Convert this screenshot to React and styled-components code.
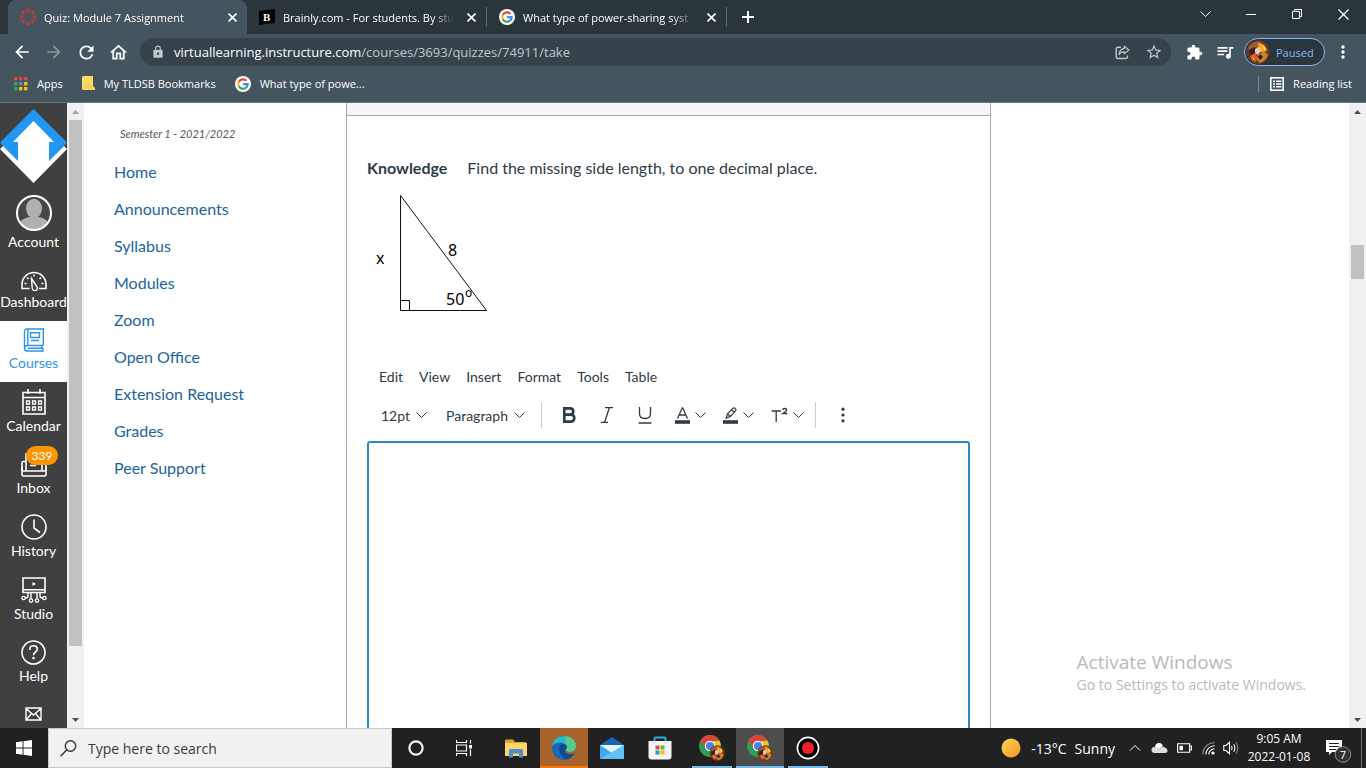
import React from "react";
import styled, { createGlobalStyle, css } from "styled-components";
import {
  MdArrowBack,
  MdArrowForward,
  MdRefresh,
  MdOutlineHome,
  MdLock,
  MdStarBorder,
  MdExtension,
  MdQueueMusic,
  MdMoreVert,
} from "react-icons/md";

const GlobalStyle = createGlobalStyle`
  * {
    box-sizing: border-box;
  }
  body {
    margin: 0;
    overflow: hidden;
    font-family: "Open Sans", "Noto Sans", sans-serif;
  }
  button, input, select, textarea {
    font: inherit;
    color: inherit;
    margin: 0;
    padding: 0;
    border: 0;
    background: none;
  }
  a {
    color: inherit;
    text-decoration: none;
  }
  svg {
    display: block;
    flex: none;
  }
`;

const Screen = styled.div`
  display: flex;
  flex-direction: column;
  height: 100vh;
`;

/* ---------- browser window ---------- */

const TabStrip = styled.div`
  display: flex;
  align-items: stretch;
  height: 34px;
  padding-left: 8px;
  background: #2b363c;
  color: #fff;
  font-size: 11px;
`;

const Tab = styled.div`
  display: flex;
  align-items: center;
  gap: 8px;
  width: 239px;
  padding: 0 7px 0 12px;
  white-space: nowrap;
  ${(props) =>
    props.$active &&
    css`
      background: #45555f;
      border-radius: 8px 8px 0 0;
    `}
`;

const TabTitle = styled.span`
  flex: 1;
  overflow: hidden;
  mask-image: linear-gradient(to right, #000 86%, transparent);
`;

const TabDivider = styled.span`
  align-self: center;
  width: 1px;
  height: 20px;
  background: #5d6a72;
`;

const IconButton = styled.button`
  display: flex;
  align-items: center;
  justify-content: center;
  width: ${(props) => props.$width || 16}px;
  color: ${(props) => props.$color || "inherit"};
`;

const WindowControls = styled.div`
  display: flex;
  margin-left: auto;
  height: 28px;
`;

const Toolbar = styled.div`
  display: flex;
  align-items: center;
  height: 36px;
  padding: 0 5px 0 6px;
  background: #45555f;
  color: #fff;
`;

const Omnibox = styled.div`
  display: flex;
  flex: 1;
  align-items: center;
  height: 28px;
  margin: 0 11px 0 6px;
  padding: 0 1px 0 11px;
  border-radius: 14px;
  background: #36434a;
  color: #c1c7ca;
  font-size: 13px;
`;

const Address = styled.span`
  flex: 1;
  padding-left: 9px;
  b {
    font-weight: 400;
    color: #fff;
  }
`;

const ProfileChip = styled.button`
  display: flex;
  align-items: center;
  gap: 6px;
  height: 28px;
  width: 81px;
  padding-left: 1px;
  border: 1px solid #8ab4f8;
  border-radius: 14px;
  background: #2b363c;
  color: #8ab4f8;
  font-size: 11px;
`;

const BookmarkBar = styled.div`
  display: flex;
  align-items: center;
  gap: 19px;
  height: 33px;
  padding: 0 14px 5px;
  border-bottom: 1px solid #6b787f;
  background: #45555f;
  color: #fff;
  font-size: 11px;
`;

const Bookmark = styled.a`
  display: flex;
  align-items: center;
  gap: 9px;
`;

const ReadingList = styled.button`
  display: flex;
  align-items: center;
  gap: 9px;
  height: 16px;
  margin-left: auto;
  padding-left: 11px;
  border-left: 1px solid #7b878e;
`;

/* ---------- page ---------- */

const Page = styled.div`
  display: flex;
  flex: 1;
  min-height: 0;
  position: relative;
  background: #fff;
  color: #2d3b45;
  font-family: Lato, sans-serif;
`;

const GlobalNav = styled.nav`
  display: flex;
  flex-direction: column;
  width: 67px;
  overflow: hidden;
  background: #404040;
`;

const LogoLink = styled.a`
  padding: 6px 0 5px;
`;

const NavItem = styled.a`
  display: flex;
  flex-direction: column;
  align-items: center;
  gap: 2px;
  padding: 7px 0 10px;
  position: relative;
  font-size: 14px;
  line-height: 18px;
  background: ${(props) => (props.$active ? "#fff" : "transparent")};
  color: ${(props) => (props.$active ? "#2c93e8" : "#fff")};
`;

const Badge = styled.span`
  position: absolute;
  top: 1px;
  left: 26px;
  width: 32px;
  border-radius: 10px;
  background: #fc9403;
  color: #fff;
  font-size: 12px;
  line-height: 19px;
  text-align: center;
`;

const ScrollTrack = styled.div`
  display: flex;
  flex-direction: column;
  align-items: center;
  width: 17px;
  background: #f1f1f1;
`;

const ScrollArrow = styled.button`
  display: flex;
  align-items: center;
  justify-content: center;
  width: 17px;
  height: 17px;
  color: ${(props) => (props.$dim ? "#a3a3a3" : "#505050")};
`;

const ScrollPart = styled.div`
  width: 13px;
  background: ${(props) => (props.$thumb ? "#c1c1c1" : "transparent")};
`;

const CourseNav = styled.nav`
  display: flex;
  flex-direction: column;
  width: 262px;
  padding: 22px 30px;
  font-size: 16px;
  line-height: 37px;
  color: #1a649b;
`;

const Term = styled.span`
  padding: 0 6px;
  margin-bottom: 10px;
  color: #4b5761;
  font-size: 11px;
  font-style: italic;
  line-height: 18px;
`;

const Question = styled.main`
  display: flex;
  flex: 1;
  flex-direction: column;
  min-width: 0;
  border: solid #a5a8aa;
  border-width: 0 1px;
`;

const QuestionHeader = styled.div`
  height: 13px;
  background: #f5f5f5;
  border-bottom: 1px solid #a5a8aa;
`;

const QuestionBody = styled.div`
  display: flex;
  flex: 1;
  flex-direction: column;
  min-height: 0;
  padding: 40px 20px 0;
`;

const Prompt = styled.p`
  display: flex;
  gap: 20px;
  margin: 0;
  font-size: 16px;
  line-height: 24px;
`;

const Triangle = styled.svg`
  margin: 10px 0 48px;
  font-family: "Noto Sans", sans-serif;
  font-size: 16px;
`;

const MenuBar = styled.div`
  display: flex;
  gap: 16px;
  padding-left: 12px;
  font-size: 14px;
  line-height: 20px;
`;

const EditorTools = styled.div`
  display: flex;
  align-items: center;
  height: 34px;
  margin: 11px 0 9px;
  padding-left: 14px;
  font-size: 14px;
`;

const Dropdown = styled.label`
  display: flex;
  align-items: center;
  gap: 6px;
  margin-right: ${(props) => props.$after}px;
  select {
    appearance: none;
    field-sizing: content;
  }
`;

const ToolGroup = styled.div`
  display: flex;
  align-items: center;
  height: 26px;
  border: solid #c7cdd1;
  border-width: 0 1px;
  padding: 0 11px 0 8px;
`;

const SplitTools = styled.div`
  display: flex;
  gap: 17px;
  margin-left: 11px;
`;

const SplitTool = styled.button`
  display: flex;
  align-items: center;
  gap: 5px;
`;

const Answer = styled.textarea`
  flex: 1;
  border: 2px solid #3088c2;
  border-bottom: 0;
  border-radius: 3px 3px 0 0;
  outline: none;
  resize: none;
  padding: 12px;
`;

const SidePanel = styled.aside`
  width: 358px;
`;

const Watermark = styled.div`
  position: absolute;
  right: 60px;
  bottom: 33px;
  color: #b9b9b9;
  font-family: "Open Sans", sans-serif;
  font-size: 14px;
  line-height: 20px;
  strong {
    display: block;
    font-size: 19px;
    font-weight: 400;
    line-height: 26px;
  }
`;

/* ---------- taskbar ---------- */

const Taskbar = styled.footer`
  display: flex;
  height: 40px;
  background: #212121;
  color: #fff;
`;

const SearchBox = styled.label`
  display: flex;
  align-items: center;
  gap: 11px;
  width: 344px;
  padding-left: 11px;
  border: 1px solid #c8c8c8;
  background: #f1f1f1;
  color: #333;
  font-size: 14px;
  input {
    flex: 1;
    outline: none;
  }
  input::placeholder {
    color: #3a3a3a;
    opacity: 1;
  }
`;

const AppGroup = styled.div`
  display: flex;
  margin-right: 4px;
`;

const tileColors = {
  orange: "#a9632c",
  current: "#4d4d4d",
};

const AppTile = styled.button`
  display: flex;
  align-items: center;
  justify-content: center;
  width: 48px;
  background: ${(props) => tileColors[props.$tile] || "transparent"};
  ${(props) =>
    props.$line &&
    css`
      background-image: linear-gradient(${props.$line}, ${props.$line});
      background-size: ${props.$tile ? "100%" : "40px"} 2px;
      background-position: bottom;
      background-repeat: no-repeat;
    `}
`;

const Tray = styled.div`
  display: flex;
  align-items: center;
  margin-left: auto;
  padding-right: 4px;
`;

const Weather = styled.button`
  display: flex;
  align-items: center;
  gap: 10px;
  margin-right: 8px;
  font-size: 14px;
  span {
    display: flex;
    gap: 8px;
  }
`;

const Clock = styled.button`
  width: 74px;
  font-size: 12px;
  line-height: 18px;
`;

const Notifications = styled.button`
  display: flex;
  align-items: center;
  justify-content: center;
  width: 46px;
  height: 40px;
  border-right: 1px solid #777;
`;

/* ---------- drawings ---------- */

const Cross = ({ size = 9, weight = 1.6 }) => (
  <svg width={size} height={size} viewBox={`0 0 ${size} ${size}`} stroke="currentColor" strokeWidth={weight}>
    <path d={`M0.5 0.5L${size - 0.5} ${size - 0.5}M${size - 0.5} 0.5L0.5 ${size - 0.5}`} />
  </svg>
);

const Chevron = ({ up, width = 11 }) => (
  <svg width={width} height="6" viewBox="0 0 11 6" fill="none" stroke="currentColor" strokeWidth="1">
    <path d={up ? "M0.5 5.5L5.5 0.5L10.5 5.5" : "M0.5 0.5L5.5 5.5L10.5 0.5"} />
  </svg>
);

const CanvasMark = () => (
  <svg width="16" height="16" viewBox="0 0 16 16" fill="none" stroke="#d6333a">
    <circle cx="8" cy="8" r="6.7" strokeWidth="2.4" strokeDasharray="3.5 1.76" strokeDashoffset="1.7" />
    <circle cx="8" cy="8" r="4" strokeWidth="0.9" strokeDasharray="0.9 2.24" />
  </svg>
);

const BrainlyMark = () => (
  <svg width="16" height="16" viewBox="0 0 16 16">
    <path d="M0 2L16 0V14L0 16Z" fill="#000" />
    <text x="4" y="12" fontSize="11" fontWeight="700" fontFamily="Liberation Serif, serif" fill="#fff">
      B
    </text>
  </svg>
);

const GoogleMark = () => (
  <svg width="16" height="16" viewBox="0 0 16 16" fill="none" strokeWidth="2.1">
    <circle cx="8" cy="8" r="8" fill="#fff" />
    <path d="M11.4 4.8A4.7 4.7 0 0 0 3.8 5.9" stroke="#ea4335" />
    <path d="M3.8 5.9A4.7 4.7 0 0 0 3.8 10.2" stroke="#fbbc05" />
    <path d="M3.8 10.2A4.7 4.7 0 0 0 11 11.6" stroke="#34a853" />
    <path d="M11 11.6A4.7 4.7 0 0 0 12.7 8.1H8.1" stroke="#4285f4" />
  </svg>
);

const AppsMark = () => {
  const colors = ["#ea4335", "#ea4335", "#ea4335", "#34a853", "#4285f4", "#fbbc05", "#34a853", "#fbbc05", "#fbbc05"];
  return (
    <svg width="14" height="14" viewBox="0 0 14 14">
      {colors.map((color, i) => (
        <rect key={i} x={(i % 3) * 5} y={Math.floor(i / 3) * 5} width="3.4" height="3.4" fill={color} />
      ))}
    </svg>
  );
};

const FolderMark = () => (
  <svg width="13" height="15" viewBox="0 0 13 15">
    <path d="M0 1.5Q0 0 1.5 0H11V10L13 12V14H1.5Q0 14 0 12.5Z" fill="#fbd966" />
    <path d="M3 8H8M3 10H10M3 12H10" stroke="#e6b93c" strokeDasharray="1.5 1" />
  </svg>
);

const ShareMark = () => (
  <svg width="15" height="15" viewBox="0 0 15 15" fill="none" stroke="currentColor" strokeWidth="1.4">
    <path d="M6 2.2H3.2Q1.2 2.2 1.2 4.2V11.5Q1.2 13.5 3.2 13.5H10.5Q12.5 13.5 12.5 11.5V10.5" />
    <path d="M9.3 1.2L13.8 5L9.3 8.8V6.8Q5.5 6.6 4 9.6Q4.4 4.2 9.3 3.4Z" strokeLinejoin="round" strokeWidth="1.2" />
  </svg>
);

const ListMark = () => (
  <svg width="14" height="14" viewBox="0 0 14 14" fill="none" stroke="currentColor" strokeWidth="1.6">
    <rect x="0.8" y="0.8" width="12.4" height="12.4" />
    <path d="M3 4.3H5M6 4.3H11.4M3 7H5M6 7H11.4M3 9.7H5M6 9.7H11.4" strokeWidth="1.4" />
  </svg>
);

const PhotoMark = ({ size = 24 }) => (
  <svg width={size} height={size} viewBox="0 0 24 24">
    <circle cx="12" cy="12" r="11.5" fill="#6d3a22" />
    <path d="M2 8Q8 0 15 2L19 6L13 9L9 7L5 12Z" fill="#a4602a" />
    <path d="M12 3L18 5L21 10L17 13L13 10Z" fill="#f6a92c" />
    <path d="M3 10L8 7L11 10L9 15L4 16Z" fill="#33242c" />
    <path d="M9 9L13 7L15 11L12 15L9 13Z" fill="#e9c9b2" />
    <path d="M4 16L9 13L12 18L9 22Q5 20 4 16Z" fill="#e45a1e" />
    <path d="M12 15L18 11L22 15Q20 21 14 23L11 20Z" fill="#c98128" />
    <path d="M14 14L17 17L14 20L12 17Z" fill="#2a1d20" />
    <path d="M17 6L20 8L18 10ZM6 17L8 18L8 20Z" fill="#ffe08a" />
  </svg>
);

const BrandMark = () => (
  <svg width="67" height="74" viewBox="0 0 67 74">
    <path d="M33.5 0L67 33.5L64 37L49 53V33H18V53L3 37L0 33.5Z" fill="#2196f3" />
    <path d="M33.5 12L54 33H49V52L64 37L67 40L33.5 74L0 40L3 37L18 52V33H13Z" fill="#fff" />
  </svg>
);

const line = { fill: "none", stroke: "currentColor", strokeWidth: 1.6 };

const AccountIcon = () => (
  <svg width="36" height="36" viewBox="0 0 36 36">
    <circle cx="18" cy="18" r="17" fill="#474747" />
    <path d="M4 27Q8 22.5 14 22L22 22Q28 22.5 32 27Q27 34.5 18 34.5Q9 34.5 4 27Z" fill="#b0b0b0" />
    <ellipse cx="18" cy="13.5" rx="8" ry="9.8" fill="#b0b0b0" />
    <circle cx="18" cy="18" r="17" fill="none" stroke="#fff" strokeWidth="2" />
  </svg>
);

const DashboardIcon = () => (
  <svg width="26" height="23" viewBox="0 0 26 23" {...line}>
    <path d="M8.5 20.5H1V16.5A12 12 0 0 1 25 16.5V20.5H18" />
    <path d="M10.5 10.5L15.6 18.2A2.6 2.6 0 1 1 11.2 20Z" strokeWidth="1.4" />
    <path d="M3.5 15.5H5.5M6 9.5L7.5 11M13 6.5V8.5M20 9.5L18.5 11M22.5 15.5H20.5" strokeWidth="1.4" />
  </svg>
);

const CoursesIcon = () => (
  <svg width="22" height="24" viewBox="0 0 22 24" {...line} strokeWidth="1.4">
    <path d="M20.3 17.5V1H4Q1.5 1 1.5 3.5V20.5Q1.5 23 4 23H20V20.5L18.8 20.2V17.5M4.8 1V17.5M20.3 17.5H4.5Q1.5 17.5 1.5 20.3M5 20.3H19" />
    <path d="M7.5 4.7H16.5V9.5H7.5ZM8 12.5H16" />
  </svg>
);

const CalendarIcon = () => (
  <svg width="24" height="26" viewBox="0 0 24 26" {...line}>
    <path d="M1 3.5H23V25H1ZM1 8.5H23M6 0V5M18 0V5" />
    <path d="M4.5 12H7.5V15H4.5ZM10.5 12H13.5V15H10.5ZM16.5 12H19.5V15H16.5ZM4.5 18H7.5V21H4.5ZM10.5 18H13.5V21H10.5ZM16.5 18H19.5V21H16.5Z" strokeWidth="1.3" />
  </svg>
);

const InboxIcon = () => (
  <svg width="26" height="25" viewBox="0 0 26 25" {...line}>
    <path d="M5 10V2H21V10M5 9.5H2.5Q1 9.5 1 11V22.5Q1 24 2.5 24H23.5Q25 24 25 22.5V11Q25 9.5 23.5 9.5H21" />
    <path d="M1 14.5V17Q1 19 3 19H23Q25 19 25 17V14.5M5 9.5V18.5M21 9.5V18.5M9 13.5H15" />
  </svg>
);

const HistoryIcon = () => (
  <svg width="26" height="26" viewBox="0 0 26 26" {...line}>
    <circle cx="13" cy="13" r="12" />
    <path d="M13 5.5V14L19 18.5" />
  </svg>
);

const StudioIcon = () => (
  <svg width="26" height="26" viewBox="0 0 26 26" {...line}>
    <path d="M2 1H24V15.5H2ZM2 12.8H24" />
    <path d="M11.5 5L15 7L11.5 9Z" fill="currentColor" stroke="none" />
    <path d="M10 16V22M16 16V22M7 16V19.5Q7 21 4 21M19 16V19.5Q19 21 22 21" strokeWidth="1.4" />
    <circle cx="2.6" cy="21" r="1.7" strokeWidth="1.3" />
    <circle cx="10" cy="23.6" r="1.7" strokeWidth="1.3" />
    <circle cx="16" cy="23.6" r="1.7" strokeWidth="1.3" />
    <circle cx="23.4" cy="21" r="1.7" strokeWidth="1.3" />
  </svg>
);

const HelpIcon = () => (
  <svg width="25" height="25" viewBox="0 0 25 25" {...line}>
    <circle cx="12.5" cy="12.5" r="11.5" />
    <path d="M8.8 10V9.3Q8.8 5.7 12.5 5.7Q16.3 5.7 16.3 9Q16.3 10.8 14.5 12Q12.5 13.3 12.5 15.2" />
    <circle cx="12.5" cy="18" r="1.3" fill="currentColor" stroke="none" />
  </svg>
);

const MailIcon = () => (
  <svg width="17" height="24" viewBox="0 0 17 24" {...line} strokeWidth="1.4">
    <path d="M1 6H16V18H1ZM1 6.5L8.5 13L16 6.5M1.5 17.5L6.5 11.5M15.5 17.5L10.5 11.5" />
  </svg>
);

const BoldMark = () => (
  <svg width="14" height="16" viewBox="0 0 14 16" fill="none" stroke="currentColor" strokeWidth="2.6">
    <path d="M2.3 1.4H8Q11.3 1.4 11.3 4.5Q11.3 7.6 8 7.6H2.3ZM2.3 7.6H8.6Q12.3 7.6 12.3 11.1Q12.3 14.6 8.6 14.6H2.3Z" />
  </svg>
);

const ItalicMark = () => (
  <svg width="14" height="16" viewBox="0 0 14 16" fill="none" stroke="currentColor" strokeWidth="1.3">
    <path d="M5 0.7H13M1 15.3H8M9.3 0.7L4.7 15.3" />
  </svg>
);

const UnderlineMark = () => (
  <svg width="14" height="17" viewBox="0 0 14 17" fill="none" stroke="currentColor" strokeWidth="1.3">
    <path d="M1.5 0V6.5Q1.5 11.5 7 11.5Q12.5 11.5 12.5 6.5V0M0.5 16H13.5" />
  </svg>
);

const ColorMark = () => (
  <svg width="15" height="17" viewBox="0 0 15 17" fill="none" stroke="currentColor">
    <path d="M2.5 11.5L7.3 0.8H7.7L12.5 11.5M4.2 8H10.8" strokeWidth="1.3" />
    <path d="M0 15H15" strokeWidth="3.6" />
  </svg>
);

const HighlightMark = () => (
  <svg width="15" height="17" viewBox="0 0 15 17" fill="none" stroke="currentColor">
    <path d="M3.2 11.2L4.5 6.8L10 1.2Q11 0.3 12.2 1.4Q13.6 2.7 12.5 3.9L7.3 9.4ZM4.5 6.8L7.3 9.4M8.6 2.8L11.2 5.2" strokeWidth="1.2" />
    <path d="M0 15H15" strokeWidth="3.6" />
  </svg>
);

const SuperscriptMark = () => (
  <svg width="17" height="16" viewBox="0 0 17 16" fill="none" stroke="currentColor" strokeWidth="1.3">
    <path d="M0.5 4H10M5.2 4V15" />
    <path d="M11.8 2.8Q12 1.4 13.8 1.4Q15.6 1.4 15.6 2.9Q15.6 4 11.9 6.6H16.3" strokeWidth="1.5" />
  </svg>
);

const DotsMark = () => (
  <svg width="4" height="16" viewBox="0 0 4 16" fill="currentColor">
    <circle cx="2" cy="2.2" r="1.6" />
    <circle cx="2" cy="8" r="1.6" />
    <circle cx="2" cy="13.8" r="1.6" />
  </svg>
);

const WindowsMark = () => (
  <svg width="16" height="16" viewBox="0 0 16 16" fill="#fff">
    <path d="M0 2.3L6.6 1.3V7.5H0ZM7.5 1.2L16 0V7.5H7.5ZM0 8.4H6.6V14.7L0 13.7ZM7.5 8.4H16V16L7.5 14.8Z" />
  </svg>
);

const SearchMark = () => (
  <svg width="17" height="17" viewBox="0 0 17 17" fill="none" stroke="currentColor" strokeWidth="1.4">
    <circle cx="10.5" cy="6" r="5.2" />
    <path d="M6.8 9.8L0.6 16.2" />
  </svg>
);

const CortanaMark = () => (
  <svg width="16" height="16" viewBox="0 0 16 16">
    <circle cx="8" cy="8" r="6.6" fill="none" stroke="#f2f2f2" strokeWidth="2.2" />
  </svg>
);

const TaskViewMark = () => (
  <svg width="16" height="16" viewBox="0 0 16 16" fill="none" stroke="#fff" strokeWidth="1.2">
    <path d="M0.5 0V2.5H10.5V0M0.5 5H10.5V11H0.5ZM0.5 16V13.5H10.5V16M14.5 0V3.5M14.5 9.5V16" />
    <path d="M13 5H16V8.5H13Z" fill="#fff" stroke="none" />
  </svg>
);

const ExplorerMark = () => (
  <svg width="22" height="19" viewBox="0 0 22 19">
    <path d="M0 1Q0 0.5 1 0.5H8L10 3H21V7H0Z" fill="#e0a526" />
    <path d="M0 4H22V17H0Z" fill="#fbd667" />
    <path d="M4 18.5V11.5Q4 10 5.5 10H16.5Q18 10 18 11.5V18.5H14V14.5H8V18.5Z" fill="#4a90cf" />
  </svg>
);

const EdgeMark = () => (
  <svg width="24" height="24" viewBox="0 0 24 24">
    <circle cx="12" cy="12" r="12" fill="#1769b5" />
    <path d="M0.3 10Q1.5 0.5 12 0Q23.5 0.5 24 10.5Q23.5 16 18 16Q13.5 16 14 13.5Q15.3 12.5 14.8 10.5Q13.5 7.5 9.5 6.5Q3.5 6 0.3 10Z" fill="#2fb7c9" />
    <path d="M14 0.2Q23.5 1.5 24 10.5Q23.5 16 18 16Q13.5 16 14 13.5Q16.5 12 14.5 8Q12 3 14 0.2Z" fill="#58c989" />
    <path d="M7 12Q7.5 8 11.5 7.7Q15.5 9 14.5 12Q12 14.5 14.5 17Q18 19.5 22.5 17Q20 22.5 14 23.5Q7 20 7 12Z" fill="#0f4a8c" />
    <path d="M14 13.5Q13.5 16 18 16Q22 16 23.5 12.5L24 15L22.7 17Q18 19.3 14.5 17Q12.2 14.8 14 13.5Z" fill="#a9632c" />
  </svg>
);

const MailAppMark = () => (
  <svg width="24" height="22" viewBox="0 0 24 22">
    <path d="M0 8L12 0L24 8V22H0Z" fill="#1565b5" />
    <path d="M0 8H24V12L12 18L0 12Z" fill="#e8f3fb" />
    <path d="M0 8L12 16L24 8V22H0Z" fill="#3fa9ec" />
    <path d="M0 22L24 8V22Z" fill="#61c3f5" />
  </svg>
);

const StoreMark = () => (
  <svg width="24" height="24" viewBox="0 0 24 24">
    <path d="M6.5 6V2.5Q6.5 1.5 7.5 1.5H16.5Q17.5 1.5 17.5 2.5V6" fill="none" stroke="#32a9e0" strokeWidth="2" />
    <path d="M0.5 5H23.5V20.5Q23.5 23.5 20.5 23.5H3.5Q0.5 23.5 0.5 20.5Z" fill="#f4f4f4" />
    <path d="M7.5 9.5H11.5V13.5H7.5Z" fill="#e8502a" />
    <path d="M12.5 9.5H16.5V13.5H12.5Z" fill="#78b51f" />
    <path d="M7.5 14.5H11.5V18.5H7.5Z" fill="#1a9ee0" />
    <path d="M12.5 14.5H16.5V18.5H12.5Z" fill="#f8b617" />
  </svg>
);

const ChromeMark = () => (
  <svg width="26" height="26" viewBox="0 0 26 26">
    <circle cx="11" cy="11" r="11" fill="#2f9e50" />
    <path d="M1.5 5.5Q5 0 11 0Q17.5 0 20.6 5.8H11L6.6 13.8Z" fill="#dc4438" />
    <path d="M20.6 5.8Q23 11 20 17Q17 22 10.5 22L15.5 13.5L14 6Z" fill="#f4c22b" />
    <circle cx="11" cy="11" r="5.2" fill="#fff" />
    <circle cx="11" cy="11" r="4.1" fill="#4584e8" />
    <svg x="10" y="10" width="16" height="16">
      <PhotoMark size={16} />
    </svg>
  </svg>
);

const RecordMark = () => (
  <svg width="24" height="24" viewBox="0 0 24 24">
    <circle cx="12" cy="12" r="10.6" fill="#000" stroke="#fff" strokeWidth="1.6" />
    <circle cx="12" cy="12" r="6" fill="#f01f28" />
  </svg>
);

const TrayMarks = () => (
  <>
    <IconButton $width={24} aria-label="Show hidden icons">
      <Chevron up width={12} />
    </IconButton>
    <IconButton $width={25} aria-label="OneDrive">
      <svg width="17" height="12" viewBox="0 0 17 12">
        <path d="M4 5Q4.5 1 8 1Q11 1 12 4L7 8L1 8Q1 5 4 5Z" fill="#fff" />
        <path d="M3.5 11Q0.5 11 0.5 8Q0.5 5 4 5Q7 4.5 9 6.5Q12 3.5 14 5.5Q16.5 6.5 16.5 8.5Q16.5 11 14 11Z" fill="#dcdcdc" />
      </svg>
    </IconButton>
    <IconButton $width={25} aria-label="Battery">
      <svg width="15" height="10" viewBox="0 0 15 10" fill="none" stroke="#fff" strokeWidth="1.1">
        <path d="M0.6 0.8H12.6V9.2H0.6ZM12.6 3H14.4V7H12.6" />
        <path d="M2.5 2.8H6V7.2H2.5Z" fill="#fff" stroke="none" />
      </svg>
    </IconButton>
    <IconButton $width={23} aria-label="Network">
      <svg width="13" height="13" viewBox="0 0 13 13" fill="none" stroke="#fff" strokeWidth="1.1">
        <path d="M0.8 12.5A11.5 11.5 0 0 1 12.5 0.8" stroke="#999" />
        <path d="M3.8 12.5A8.7 8.7 0 0 1 12.5 3.8M6.8 12.5A5.7 5.7 0 0 1 12.5 6.8" />
        <circle cx="11" cy="11" r="1.6" fill="#fff" stroke="none" />
      </svg>
    </IconButton>
    <IconButton $width={22} aria-label="Volume">
      <svg width="16" height="14" viewBox="0 0 16 14" fill="none" stroke="#fff" strokeWidth="1.1">
        <path d="M0.8 4.5H3L6.5 1.3V12.7L3 9.5H0.8ZM8.5 5Q9.7 7 8.5 9M10.7 3.2Q13 7 10.7 10.8" />
        <path d="M13 1.5Q16.5 7 13 12.5" stroke="#888" />
      </svg>
    </IconButton>
  </>
);

const NotificationMark = () => (
  <svg width="27" height="30" viewBox="0 0 27 30">
    <path d="M1 7H17V19H7L4 22V19H1Z" fill="#fff" />
    <path d="M4 10.5H14M4 13.5H14M4 16.5H11" stroke="#212121" />
    <circle cx="18" cy="21.5" r="7.8" fill="#333" stroke="#8b8b8b" />
    <text x="18" y="25.5" fontSize="11" textAnchor="middle" fill="#fff">
      7
    </text>
  </svg>
);

/* ---------- assembly ---------- */

const ArrowTip = ({ down }) => (
  <svg width="7" height="4" viewBox="0 0 7 4" fill="currentColor">
    <path d={down ? "M0 0H7L3.5 4Z" : "M0 4H7L3.5 0Z"} />
  </svg>
);

const Scrollbar = ({ before, thumb, after, dimTop }) => (
  <ScrollTrack>
    <ScrollArrow $dim={dimTop} aria-label="Scroll up">
      <ArrowTip />
    </ScrollArrow>
    <ScrollPart style={{ flexGrow: before }} />
    <ScrollPart $thumb style={{ flexGrow: thumb }} />
    <ScrollPart style={{ flexGrow: after }} />
    <ScrollArrow aria-label="Scroll down">
      <ArrowTip down />
    </ScrollArrow>
  </ScrollTrack>
);

const navItems = [
  { label: "Account", icon: <AccountIcon /> },
  { label: "Dashboard", icon: <DashboardIcon /> },
  { label: "Courses", icon: <CoursesIcon />, active: true },
  { label: "Calendar", icon: <CalendarIcon /> },
  { label: "Inbox", icon: <InboxIcon />, badge: "339" },
  { label: "History", icon: <HistoryIcon /> },
  { label: "Studio", icon: <StudioIcon /> },
  { label: "Help", icon: <HelpIcon /> },
];

const courseLinks = [
  "Home",
  "Announcements",
  "Syllabus",
  "Modules",
  "Zoom",
  "Open Office",
  "Extension Request",
  "Grades",
  "Peer Support",
];

const Browser = () => (
  <header>
    <TabStrip>
      <Tab $active>
        <CanvasMark />
        <TabTitle>Quiz: Module 7 Assignment</TabTitle>
        <IconButton aria-label="Close tab">
          <Cross />
        </IconButton>
      </Tab>
      <Tab>
        <BrainlyMark />
        <TabTitle>Brainly.com - For students. By stu</TabTitle>
        <IconButton aria-label="Close tab">
          <Cross />
        </IconButton>
      </Tab>
      <TabDivider />
      <Tab>
        <GoogleMark />
        <TabTitle>What type of power-sharing syst</TabTitle>
        <IconButton aria-label="Close tab">
          <Cross />
        </IconButton>
      </Tab>
      <TabDivider />
      <IconButton $width={42} aria-label="New tab">
        <svg width="12" height="12" viewBox="0 0 12 12" stroke="currentColor" strokeWidth="2">
          <path d="M6 0V12M0 6H12" />
        </svg>
      </IconButton>
      <WindowControls>
        <IconButton $width={46} aria-label="Search tabs">
          <Chevron />
        </IconButton>
        <IconButton $width={46} aria-label="Minimize">
          <svg width="10" height="10" viewBox="0 0 10 10" stroke="currentColor">
            <path d="M0 5.5H10" />
          </svg>
        </IconButton>
        <IconButton $width={46} aria-label="Restore">
          <svg width="10" height="10" viewBox="0 0 10 10" fill="none" stroke="currentColor">
            <path d="M0.5 2.5H7.5V9.5H0.5ZM2.5 2.5V0.5H9.5V7.5H7.5" />
          </svg>
        </IconButton>
        <IconButton $width={46} aria-label="Close">
          <Cross size={11} weight={1.2} />
        </IconButton>
      </WindowControls>
    </TabStrip>
    <Toolbar>
      <IconButton $width={32} aria-label="Back">
        <MdArrowBack size={20} />
      </IconButton>
      <IconButton $width={32} $color="#8b969c" aria-label="Forward">
        <MdArrowForward size={20} />
      </IconButton>
      <IconButton $width={32} aria-label="Reload">
        <MdRefresh size={21} />
      </IconButton>
      <IconButton $width={32} aria-label="Home">
        <MdOutlineHome size={21} />
      </IconButton>
      <Omnibox>
        <MdLock size={14} />
        <Address>
          <b>virtuallearning.instructure.com</b>/courses/3693/quizzes/74911/take
        </Address>
        <IconButton $width={32} aria-label="Share">
          <ShareMark />
        </IconButton>
        <IconButton $width={32} aria-label="Bookmark">
          <MdStarBorder size={18} />
        </IconButton>
      </Omnibox>
      <IconButton $width={24} aria-label="Extensions">
        <MdExtension size={17} />
      </IconButton>
      <IconButton $width={38} aria-label="Media">
        <MdQueueMusic size={20} />
      </IconButton>
      <ProfileChip>
        <PhotoMark />
        Paused
      </ProfileChip>
      <IconButton $width={36} aria-label="Menu">
        <MdMoreVert size={20} />
      </IconButton>
    </Toolbar>
    <BookmarkBar>
      <Bookmark href="#">
        <AppsMark />
        Apps
      </Bookmark>
      <Bookmark href="#">
        <FolderMark />
        My TLDSB Bookmarks
      </Bookmark>
      <Bookmark href="#">
        <GoogleMark />
        What type of powe...
      </Bookmark>
      <ReadingList>
        <ListMark />
        Reading list
      </ReadingList>
    </BookmarkBar>
  </header>
);

const Editor = () => (
  <>
    <MenuBar>
      {["Edit", "View", "Insert", "Format", "Tools", "Table"].map((name) => (
        <button key={name}>{name}</button>
      ))}
    </MenuBar>
    <EditorTools>
      <Dropdown $after={19}>
        <select aria-label="Font size">
          <option>12pt</option>
        </select>
        <Chevron />
      </Dropdown>
      <Dropdown $after={16}>
        <select aria-label="Block format">
          <option>Paragraph</option>
        </select>
        <Chevron />
      </Dropdown>
      <ToolGroup>
        <IconButton $width={38} aria-label="Bold">
          <BoldMark />
        </IconButton>
        <IconButton $width={38} aria-label="Italic">
          <ItalicMark />
        </IconButton>
        <IconButton $width={38} aria-label="Underline">
          <UnderlineMark />
        </IconButton>
        <SplitTools>
          <SplitTool aria-label="Text color">
            <ColorMark />
            <Chevron />
          </SplitTool>
          <SplitTool aria-label="Highlight color">
            <HighlightMark />
            <Chevron />
          </SplitTool>
          <SplitTool aria-label="Superscript">
            <SuperscriptMark />
            <Chevron />
          </SplitTool>
        </SplitTools>
      </ToolGroup>
      <IconButton $width={54} aria-label="More">
        <DotsMark />
      </IconButton>
    </EditorTools>
    <Answer aria-label="Answer" />
  </>
);

const App = () => (
  <Screen>
    <GlobalStyle />
    <Browser />
    <Page>
      <GlobalNav>
        <LogoLink href="#" aria-label="Institution home">
          <BrandMark />
        </LogoLink>
        {navItems.map((item) => (
          <NavItem key={item.label} href="#" $active={item.active}>
            {item.icon}
            {item.label}
            {item.badge && <Badge>{item.badge}</Badge>}
          </NavItem>
        ))}
        <NavItem href="#" aria-label="Mail">
          <MailIcon />
        </NavItem>
      </GlobalNav>
      <Scrollbar before={0} thumb={526} after={65} dimTop />
      <CourseNav>
        <Term>Semester 1 - 2021/2022</Term>
        {courseLinks.map((name) => (
          <a key={name} href="#">
            {name}
          </a>
        ))}
      </CourseNav>
      <Question>
        <QuestionHeader />
        <QuestionBody>
          <Prompt>
            <strong>Knowledge</strong>
            <span>Find the missing side length, to one decimal place.</span>
          </Prompt>
          <Triangle width="130" height="129" viewBox="0 0 130 129">
            <path d="M33.5 5.5V120.5H119.5ZM33.5 110.5H42.5V120.5" fill="none" stroke="#111" />
            <text x="9" y="74">x</text>
            <text x="81" y="66">8</text>
            <text x="79" y="115">50</text>
            <text x="98" y="107" fontSize="12">
              o
            </text>
          </Triangle>
          <Editor />
        </QuestionBody>
      </Question>
      <SidePanel />
      <Scrollbar before={125} thumb={34} after={432} />
      <Watermark>
        <strong>Activate Windows</strong>
        Go to Settings to activate Windows.
      </Watermark>
    </Page>
    <Taskbar>
      <AppTile aria-label="Start">
        <WindowsMark />
      </AppTile>
      <SearchBox>
        <SearchMark />
        <input type="text" placeholder="Type here to search" aria-label="Type here to search" />
      </SearchBox>
      <AppGroup>
        <AppTile aria-label="Cortana">
          <CortanaMark />
        </AppTile>
        <AppTile aria-label="Task view">
          <TaskViewMark />
        </AppTile>
      </AppGroup>
      <AppGroup>
        <AppTile aria-label="File Explorer">
          <ExplorerMark />
        </AppTile>
        <AppTile $tile="orange" $line="#f7790a" aria-label="Edge">
          <EdgeMark />
        </AppTile>
        <AppTile aria-label="Mail">
          <MailAppMark />
        </AppTile>
        <AppTile aria-label="Store">
          <StoreMark />
        </AppTile>
      </AppGroup>
      <AppGroup>
        <AppTile $line="#76b9ed" aria-label="Chrome">
          <ChromeMark />
        </AppTile>
        <AppTile $tile="current" $line="#76b9ed" aria-label="Chrome, second profile">
          <ChromeMark />
        </AppTile>
        <AppTile $line="#76b9ed" aria-label="Recorder">
          <RecordMark />
        </AppTile>
      </AppGroup>
      <Tray>
        <Weather>
          <svg width="20" height="20" viewBox="0 0 20 20">
            <defs>
              <linearGradient id="sun" x1="0" y1="0" x2="1" y2="1">
                <stop offset="0" stopColor="#ffd95a" />
                <stop offset="1" stopColor="#f7921e" />
              </linearGradient>
            </defs>
            <circle cx="10" cy="10" r="9.5" fill="url(#sun)" />
          </svg>
          <span>
            <span>-13°C</span>
            <span>Sunny</span>
          </span>
        </Weather>
        <TrayMarks />
        <Clock>
          9:05 AM
          <br />
          2022-01-08
        </Clock>
        <Notifications aria-label="Notifications">
          <NotificationMark />
        </Notifications>
      </Tray>
    </Taskbar>
  </Screen>
);

export default App;
